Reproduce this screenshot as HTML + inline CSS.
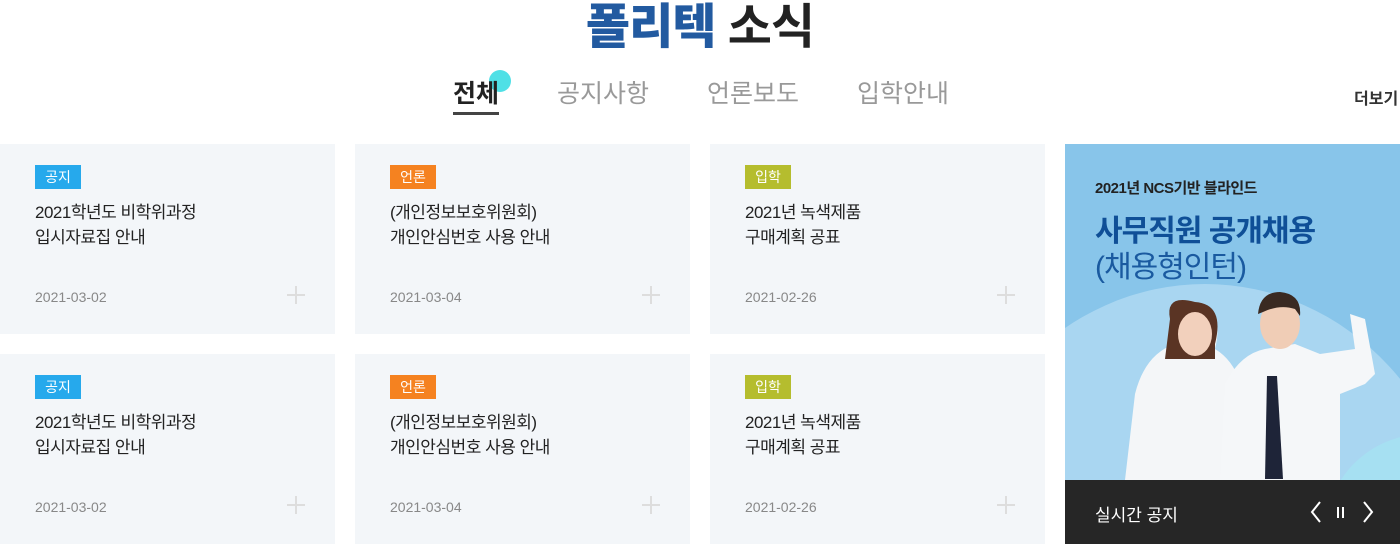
<!DOCTYPE html>
<html><head><meta charset="utf-8"><style>
*{margin:0;padding:0;box-sizing:border-box}
html,body{width:1400px;height:544px;overflow:hidden}
body{background:#fff;font-family:"Liberation Sans","Noto Sans CJK KR",sans-serif;position:relative}
.title{position:absolute;top:-6px;left:0;width:1400px;text-align:center;font-size:48px;font-weight:bold;color:#222;letter-spacing:-1px;line-height:68px}
.title b{color:#225aa0}
.tab{position:absolute;top:74px;font-size:25px;color:#999;}
.tab.on{color:#222;font-weight:bold;border-bottom:3px solid #444;padding-bottom:2px}
.dot{position:absolute;left:489px;top:70px;width:22px;height:22px;border-radius:50%;background:#4fe0e6}
.more{position:absolute;left:1354px;top:85px;font-size:16px;font-weight:bold;color:#333}
.card{position:absolute;width:335px;height:190px;background:#f3f6f9}
.badge{position:absolute;left:35px;top:21px;width:46px;height:24px;color:#fff;font-size:14px;text-align:center;line-height:24px}
.t{position:absolute;left:35px;top:56px;font-size:17px;line-height:25px;color:#222;letter-spacing:-0.5px}
.d{position:absolute;left:35px;top:145px;font-size:14px;color:#888}
.p{position:absolute;left:287px;top:142px;width:18px;height:18px}
.p:before{content:"";position:absolute;left:0;top:8px;width:18px;height:2px;background:#ddd}
.p:after{content:"";position:absolute;left:8px;top:0;width:2px;height:18px;background:#ddd}
.ban{position:absolute;left:1065px;top:144px;width:335px;height:400px;background:#88c5ea;overflow:hidden}
.bar{position:absolute;left:0;top:336px;width:335px;height:64px;background:#262626;color:#fff}
</style></head><body>
<div class="title"><b>폴리텍</b> 소식</div>
<div class="dot"></div>
<div class="tab on" style="left:453px">전체</div>
<div class="tab" style="left:557px">공지사항</div>
<div class="tab" style="left:707px">언론보도</div>
<div class="tab" style="left:857px">입학안내</div>
<div class="more">더보기</div>

<div class="card" style="left:0;top:144px"><div class="badge" style="background:#26a9ec">공지</div><div class="t">2021학년도 비학위과정<br>입시자료집 안내</div><div class="d">2021-03-02</div><div class="p"></div></div>
<div class="card" style="left:355px;top:144px"><div class="badge" style="background:#f58220">언론</div><div class="t">(개인정보보호위원회)<br>개인안심번호 사용 안내</div><div class="d">2021-03-04</div><div class="p"></div></div>
<div class="card" style="left:710px;top:144px"><div class="badge" style="background:#b5bd2e">입학</div><div class="t">2021년 녹색제품<br>구매계획 공표</div><div class="d">2021-02-26</div><div class="p"></div></div>
<div class="card" style="left:0;top:354px"><div class="badge" style="background:#26a9ec">공지</div><div class="t">2021학년도 비학위과정<br>입시자료집 안내</div><div class="d">2021-03-02</div><div class="p"></div></div>
<div class="card" style="left:355px;top:354px"><div class="badge" style="background:#f58220">언론</div><div class="t">(개인정보보호위원회)<br>개인안심번호 사용 안내</div><div class="d">2021-03-04</div><div class="p"></div></div>
<div class="card" style="left:710px;top:354px"><div class="badge" style="background:#b5bd2e">입학</div><div class="t">2021년 녹색제품<br>구매계획 공표</div><div class="d">2021-02-26</div><div class="p"></div></div>

<div class="ban">
<svg width="335" height="400" style="position:absolute;left:0;top:0">
<ellipse cx="140" cy="420" rx="260" ry="280" fill="#a9d6f1"/>
<circle cx="360" cy="390" r="100" fill="#a6e0f2"/>
<path d="M60 336 L70 250 Q80 210 110 200 Q100 160 130 160 Q160 165 150 205 Q175 220 180 260 L185 336Z" fill="#f4f6f8"/>
<path d="M105 175 Q100 150 130 158 Q160 160 150 200 L150 215 L100 215Z" fill="#5a3424"/>
<ellipse cx="130" cy="190" rx="17" ry="22" fill="#f2d0bc"/>
<path d="M155 336 L160 240 Q175 210 200 205 L230 200 L255 210 L290 205 L285 170 L300 175 L310 230 L300 240 L275 250 L275 336Z" fill="#f5f7f9"/>
<ellipse cx="215" cy="180" rx="20" ry="25" fill="#f0cdb6"/>
<path d="M193 170 Q195 148 215 148 Q237 150 235 172 L230 165 Q215 160 198 168Z" fill="#3a2a22"/>
<path d="M202 232 L212 232 L218 335 L200 335Z" fill="#1e2438"/>
</svg>
<div style="position:absolute;left:30px;top:33px;font-size:15px;font-weight:bold;color:#222;letter-spacing:-0.5px">2021년 NCS기반 블라인드</div>
<div style="position:absolute;left:30px;top:62px;font-size:30px;font-weight:bold;color:#0f4f97;letter-spacing:-1px">사무직원 공개채용</div>
<div style="position:absolute;left:30px;top:98px;font-size:30px;color:#1a5aa0;letter-spacing:-1px">(채용형인턴)</div>
<div class="bar">
<div style="position:absolute;left:30px;top:21px;font-size:17px">실시간 공지</div>
<svg width="80" height="30" style="position:absolute;left:242px;top:17px" fill="none" stroke="#fff" stroke-width="2">
<path d="M13 5 L5 15 L13 25"/><path d="M31 10 V21 M36 10 V21"/><path d="M57 5 L65 15 L57 25"/>
</svg>
</div>
</div>
</body></html>
